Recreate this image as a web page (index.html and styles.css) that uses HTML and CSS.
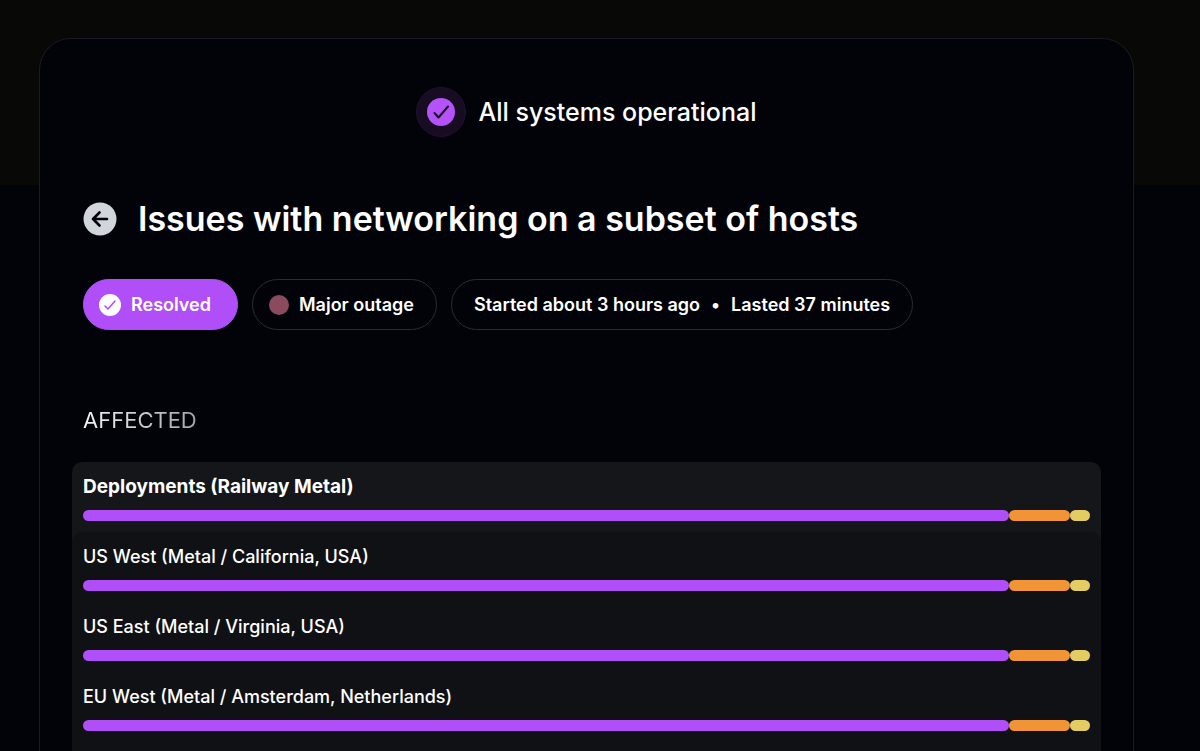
FILE: index.html
```html
<!DOCTYPE html>
<html lang="en">
<head>
<meta charset="utf-8">
<meta name="viewport" content="width=device-width, initial-scale=1">
<title>Issues with networking on a subset of hosts</title>
<link rel="stylesheet" href="styles.css">
</head>
<body>
<main class="card">
  <header class="status">
    <span class="status-icon">
      <svg width="28" height="28" viewBox="0 0 28 28">
        <circle cx="14" cy="14" r="14" fill="#b552fa"/>
        <path d="M7.5 15 L11.5 19.5 L21 8.5" fill="none" stroke="#170c22" stroke-width="2" stroke-linecap="round" stroke-linejoin="round"/>
      </svg>
    </span>
    <span class="status-text">All systems operational</span>
  </header>

  <div class="heading">
    <a class="back" href="#" aria-label="Back">
      <svg width="34" height="34" viewBox="0 0 34 34">
        <circle cx="17" cy="17" r="16.5" fill="#d1d5dc"/>
        <path d="M24 17 H10 M16.5 10.5 L10 17 L16.5 23.5" fill="none" stroke="#020308" stroke-width="2.6" stroke-linecap="round" stroke-linejoin="round"/>
      </svg>
    </a>
    <h1 class="title">Issues with networking on a subset of hosts</h1>
  </div>

  <div class="pills">
    <span class="pill pill-resolved">
      <svg width="22" height="22" viewBox="0 0 22 22">
        <circle cx="11" cy="11" r="11" fill="#fff"/>
        <path d="M6 12 L9 15 L16 7" fill="none" stroke="#b04cf7" stroke-width="1.5" stroke-linecap="round" stroke-linejoin="round"/>
      </svg>
      Resolved
    </span>
    <span class="pill pill-outage"><span class="dot"></span>Major outage</span>
    <span class="pill pill-time"><span>Started about 3 hours ago</span><span>•</span><span>Lasted 37 minutes</span></span>
  </div>

  <h2 class="label">AFFECTED</h2>

  <section class="affected">
    <div class="row row-group">
      <div class="name">Deployments (Railway Metal)</div>
      <div class="bar">
        <span class="seg seg-ok" style="width:92%"></span>
        <span class="seg seg-major" style="width:6%"></span>
        <span class="seg seg-minor" style="width:2%"></span>
      </div>
    </div>
    <div class="regions">
      <div class="row">
        <div class="name">US West (Metal / California, USA)</div>
        <div class="bar">
          <span class="seg seg-ok" style="width:92%"></span>
          <span class="seg seg-major" style="width:6%"></span>
          <span class="seg seg-minor" style="width:2%"></span>
        </div>
      </div>
      <div class="row">
        <div class="name">US East (Metal / Virginia, USA)</div>
        <div class="bar">
          <span class="seg seg-ok" style="width:92%"></span>
          <span class="seg seg-major" style="width:6%"></span>
          <span class="seg seg-minor" style="width:2%"></span>
        </div>
      </div>
      <div class="row">
        <div class="name">EU West (Metal / Amsterdam, Netherlands)</div>
        <div class="bar">
          <span class="seg seg-ok" style="width:92%"></span>
          <span class="seg seg-major" style="width:6%"></span>
          <span class="seg seg-minor" style="width:2%"></span>
        </div>
      </div>
    </div>
  </section>
</main>
</body>
</html>
```
FILE: styles.css
```css
* {
  box-sizing: border-box;
}
body {
  margin: 0;
  min-height: 100vh;
  padding: 38px 66px 0 39px;
  display: flex;
  flex-direction: column;
  background: linear-gradient(#080807 185px, #020308 185px);
  font-family: Inter, "Liberation Sans", sans-serif;
  color: #fff;
}
svg {
  display: block;
  flex: none;
}
.card {
  flex: 1;
  display: flex;
  flex-direction: column;
  padding: 48px 32px 0;
  background: #020308;
  border: 1px solid #191a25;
  border-bottom: 0;
  border-radius: 32px 32px 0 0;
}

/* overall status */
.status {
  display: flex;
  align-items: center;
  justify-content: center;
  gap: 12px;
}
.status-icon {
  width: 50px;
  height: 50px;
  display: flex;
  align-items: center;
  justify-content: center;
  background: #170c22;
  border: 1px solid #21102f;
  border-radius: 50%;
}
.status-text {
  font-size: 25px;
  line-height: 32px;
  font-weight: 500;
}

/* incident heading */
.heading {
  display: flex;
  align-items: center;
  gap: 21px;
  margin-top: 60px;
  padding: 0 11px;
}
.title {
  margin: 0;
  font-size: 34px;
  line-height: 44px;
  font-weight: 600;
}
.pills {
  display: flex;
  flex-wrap: wrap;
  gap: 14px;
  margin-top: 38px;
  padding: 0 11px;
}
.pill {
  height: 51px;
  display: flex;
  align-items: center;
  gap: 10px;
  border: 1px solid #2a2b38;
  border-radius: 26px;
  font-size: 18px;
  line-height: 24px;
  font-weight: 600;
  white-space: nowrap;
}
.pill-resolved {
  padding: 0 26px 0 15px;
  background: #b04ff8;
  border-color: #b04ff8;
}
.pill-outage {
  padding: 0 22px 0 16px;
}
.pill-time {
  gap: 11px;
  padding: 0 22px;
}
.dot {
  width: 20px;
  height: 20px;
  border-radius: 50%;
  background: #8a4a60;
}

/* affected components */
.label {
  margin: 76px 11px 0;
  align-self: flex-start;
  font-size: 22px;
  line-height: 28px;
  font-weight: 400;
  background: linear-gradient(90deg, #f4f4f5, #a5a6aa);
  -webkit-background-clip: text;
  background-clip: text;
  color: transparent;
}
.affected {
  flex: 1;
  display: flex;
  flex-direction: column;
  margin-top: 28px;
  background: #151619;
  border-radius: 10px 10px 0 0;
}
.regions {
  flex: 1;
  background: #101114;
  border-radius: 10px 10px 0 0;
}
.row {
  padding: 13px 11px 11px;
}
.name {
  font-size: 18px;
  line-height: 24px;
  font-weight: 500;
}
.row-group .name {
  font-size: 19px;
  font-weight: 700;
}
.bar {
  display: flex;
  margin-top: 11px;
}
.seg {
  height: 11px;
  border-radius: 6px;
}
.seg-ok {
  background: #b04ff8;
}
.seg-major {
  background: #f09436;
}
.seg-minor {
  background: #e5cc62;
}
```
